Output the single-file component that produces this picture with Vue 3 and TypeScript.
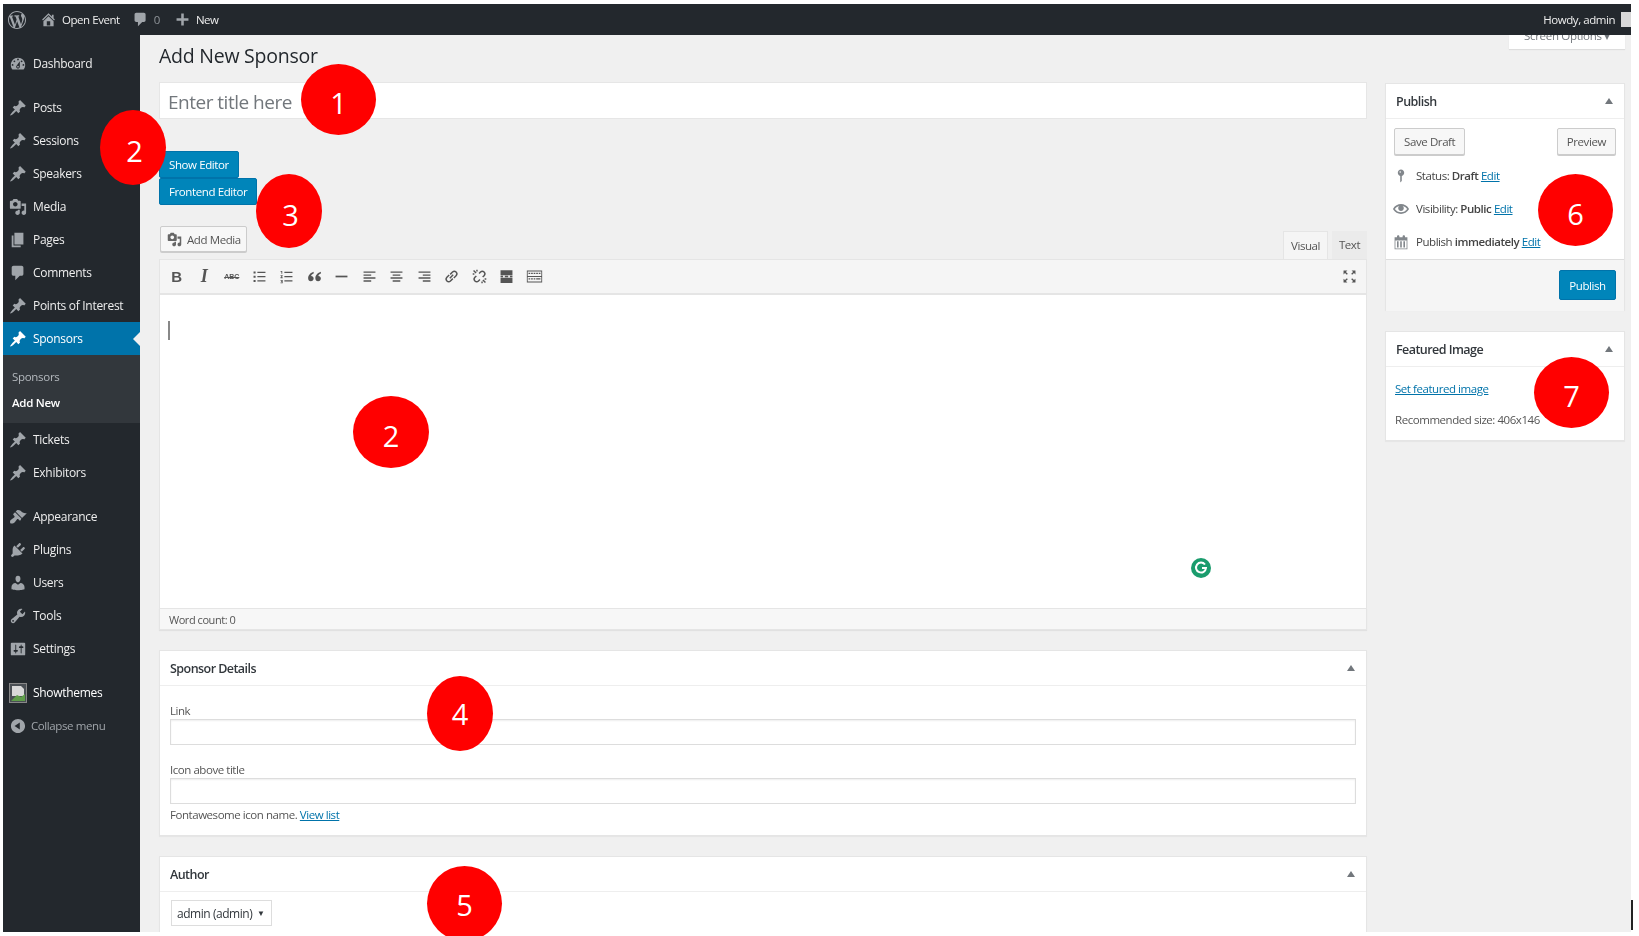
<template>
  <div class="page">
    <div class="frame">
      <header class="adminbar">
        <svg class="bar-logo" viewBox="0 0 20 20"><path :d="icons.wp" /></svg>
        <div class="bar-item">
          <svg class="bar-icon" viewBox="0 0 20 20"><path :d="icons.home" /></svg>
          <span>Open Event</span>
        </div>
        <div class="bar-item count">
          <svg class="bar-icon" viewBox="0 0 20 20"><path :d="icons.comment" /></svg>
          <span class="muted">0</span>
        </div>
        <div class="bar-item">
          <svg class="bar-icon" viewBox="0 0 20 20"><path :d="icons.plus" /></svg>
          <span>New</span>
        </div>
        <div class="bar-right">
          <span>Howdy, admin</span>
          <i class="avatar"></i>
        </div>
      </header>

      <div class="body">
        <nav class="sidebar">
          <template v-for="group in menu" :key="group[0].label">
            <div class="menu-group">
              <template v-for="item in group" :key="item.label">
                <div class="menu-row" :class="{ active: item.active }">
                  <svg class="menu-icon" viewBox="0 0 20 20"><path :d="icons[item.icon]" /></svg>
                  <span>{{ item.label }}</span>
                </div>
                <div v-if="item.active" class="submenu">
                  <div class="sub-row">Sponsors</div>
                  <div class="sub-row current">Add New</div>
                </div>
              </template>
            </div>
          </template>
          <div class="menu-group">
            <div class="menu-row">
              <svg class="theme-thumb" viewBox="0 0 18 20">
                <rect x="0.5" y="0.5" width="17" height="19" fill="#4a4f54" stroke="#888" />
                <path d="M3 3h9l3 3v7H3z" fill="#d9d9d9" />
                <path d="M2 18l6-6 4 2 4-3v7H2z" fill="#5f9e4a" />
              </svg>
              <span class="bright">Showthemes</span>
            </div>
            <div class="menu-row collapse">
              <svg class="menu-icon" viewBox="0 0 20 20"><path :d="icons.collapse" /></svg>
              <span>Collapse menu</span>
            </div>
          </div>
        </nav>

        <main class="content">
          <div class="head-row">
            <h1>Add New Sponsor</h1>
            <div class="screen-options">Screen Options ▾</div>
          </div>

          <div class="columns">
            <section class="left">
              <div class="title-input">Enter title here</div>

              <div class="editor-buttons">
                <button class="btn-blue">Show Editor</button>
                <button class="btn-blue">Frontend Editor</button>
              </div>

              <div class="media-row">
                <button class="btn add-media">
                  <svg viewBox="0 0 20 20"><path :d="icons.media" /></svg>
                  Add Media
                </button>
                <div class="tabs">
                  <span class="tab on">Visual</span>
                  <span class="tab">Text</span>
                </div>
              </div>

              <div class="toolbar">
                <b class="tool glyph bold">B</b>
                <i class="tool glyph italic">I</i>
                <s class="tool glyph abc">ABC</s>
                <span v-for="tool in tools" :key="tool.name" class="tool">
                  <svg viewBox="0 0 20 20">
                    <path :d="tool.d" :class="{ line: tool.line }" />
                  </svg>
                </span>
                <span class="tool full">
                  <svg viewBox="0 0 20 20"><path :d="fullscreen" /></svg>
                </span>
              </div>
              <div class="editor-area">
                <i class="caret"></i>
                <svg class="grammarly" viewBox="0 0 20 20">
                  <circle cx="10" cy="10" r="10" fill="#1a9c6d" />
                  <path d="M14 6.5A5 5 0 1 0 15 10h-4" fill="none" stroke="#fff" stroke-width="2" />
                </svg>
              </div>
              <div class="status-bar">Word count: 0</div>

              <div class="box details">
                <div class="box-head"><h2>Sponsor Details</h2><i class="toggle"></i></div>
                <div class="box-body">
                  <label>Link</label>
                  <div class="field"></div>
                  <label class="second">Icon above title</label>
                  <div class="field"></div>
                  <p class="hint">Fontawesome icon name. <a>View list</a></p>
                </div>
              </div>

              <div class="box author">
                <div class="box-head"><h2>Author</h2><i class="toggle"></i></div>
                <div class="author-body">
                  <div class="select">admin (admin) <small>▼</small></div>
                </div>
              </div>
            </section>

            <aside class="side">
              <div class="box publish">
                <div class="box-head"><h2>Publish</h2><i class="toggle"></i></div>
                <div class="publish-top">
                  <button class="btn">Save Draft</button>
                  <button class="btn">Preview</button>
                </div>
                <div class="pub-row">
                  <svg viewBox="0 0 20 20"><path :d="icons.pin" /></svg>
                  <span>Status: <b>Draft</b> <a>Edit</a></span>
                </div>
                <div class="pub-row">
                  <svg viewBox="0 0 20 20"><path :d="icons.eye" /></svg>
                  <span>Visibility: <b>Public</b> <a>Edit</a></span>
                </div>
                <div class="pub-row">
                  <svg viewBox="0 0 20 20"><path :d="icons.calendar" /></svg>
                  <span>Publish <b>immediately</b> <a>Edit</a></span>
                </div>
                <div class="publish-foot">
                  <button class="btn-blue big">Publish</button>
                </div>
              </div>

              <div class="box featured">
                <div class="box-head"><h2>Featured Image</h2><i class="toggle"></i></div>
                <div class="featured-body">
                  <a>Set featured image</a>
                  <p>Recommended size: 406x146</p>
                </div>
              </div>
            </aside>
          </div>
        </main>
      </div>
    </div>

    <div class="mark m1">1</div>
    <div class="mark m2">2</div>
    <div class="mark m3">3</div>
    <div class="mark m2b">2</div>
    <div class="mark m4">4</div>
    <div class="mark m5">5</div>
    <div class="mark m6">6</div>
    <div class="mark m7">7</div>
    <i class="edge-mark"></i>
  </div>
</template>

<script setup lang="ts">
interface MenuItem {
  label: string
  icon: string
  active?: boolean
}

const icons: Record<string, string> = {
  wp: 'M20 10c0-5.51-4.49-10-10-10C4.48 0 0 4.49 0 10c0 5.52 4.48 10 10 10 5.51 0 10-4.48 10-10zM7.78 15.37L4.37 6.22c.55-.02 1.17-.08 1.17-.08.5-.06.44-1.13-.06-1.11 0 0-1.45.11-2.37.11-.18 0-.37 0-.58-.01C4.12 2.69 6.87 1.11 10 1.11c2.33 0 4.45.87 6.05 2.34-.68-.11-1.65.39-1.65 1.58 0 .74.45 1.36.9 2.1.35.61.55 1.36.55 2.46 0 1.49-1.4 5-1.4 5l-3.03-8.37c.54-.02.82-.17.82-.17.5-.05.44-1.25-.06-1.22 0 0-1.44.12-2.38.12-.87 0-2.33-.12-2.33-.12-.5-.03-.56 1.2-.06 1.22l.92.08 1.26 3.41zM17.41 10c.24-.64.74-1.87.43-4.25.7 1.29 1.05 2.71 1.05 4.25 0 3.29-1.73 6.24-4.4 7.78.97-2.59 1.94-5.2 2.92-7.78zM6.1 18.09C3.12 16.65 1.11 13.53 1.11 10c0-1.3.23-2.48.72-3.59C3.25 10.3 4.67 14.2 6.1 18.09zm4.03-6.63l2.58 6.98c-.86.29-1.76.45-2.71.45-.79 0-1.57-.11-2.29-.33.81-2.38 1.62-4.74 2.42-7.1z',
  home: 'M16 8.5l1.53 1.53-1.06 1.06L10 4.62l-6.47 6.47-1.06-1.06L10 2.5l4 4v-2h2v4zm-6-2.46l6 5.99V18H4v-5.97zM12 17v-5H8v5h4z',
  comment: 'M5 2h9c1.1 0 2 .9 2 2v7c0 1.1-.9 2-2 2h-2l-5 5v-5H5c-1.1 0-2-.9-2-2V4c0-1.1.9-2 2-2z',
  plus: 'M17 8.5v3h-5.5V17h-3v-5.5H3v-3h5.5V3h3v5.5z',
  dashboard: 'M3.76 16h12.48c1.1-1.37 1.76-3.11 1.76-5 0-4.42-3.58-8-8-8s-8 3.58-8 8c0 1.89.66 3.63 1.76 5zM10 4c.55 0 1 .45 1 1s-.45 1-1 1-1-.45-1-1 .45-1 1-1zM6 6c.55 0 1 .45 1 1s-.45 1-1 1-1-.45-1-1 .45-1 1-1zm8 0c.55 0 1 .45 1 1s-.45 1-1 1-1-.45-1-1 .45-1 1-1zm-5.37 5.55L12 7v6c0 1.1-.9 2-2 2s-2-.9-2-2c0-.57.24-1.08.63-1.45zM4 10c.55 0 1 .45 1 1s-.45 1-1 1-1-.45-1-1 .45-1 1-1zm12 0c.55 0 1 .45 1 1s-.45 1-1 1-1-.45-1-1 .45-1 1-1zm-5 3c0-.55-.45-1-1-1s-1 .45-1 1 .45 1 1 1 1-.45 1-1z',
  post: 'M10.44 3.02l1.82-1.82 6.36 6.35-1.83 1.82c-1.05-.68-2.48-.57-3.41.36l-.75.75c-.92.93-1.04 2.35-.35 3.41l-1.83 1.82-2.41-2.41-2.8 2.79c-.42.42-3.38 2.71-3.8 2.29s1.86-3.39 2.28-3.81l2.79-2.79L4.1 9.36l1.83-1.82c1.05.69 2.48.57 3.4-.36l.75-.75c.93-.92 1.05-2.35.36-3.41z',
  media: 'M13 11V4c0-.55-.45-1-1-1h-1.67L9 1H5L3.67 3H2c-.55 0-1 .45-1 1v7c0 .55.45 1 1 1h10c.55 0 1-.45 1-1zM7 4.5c1.38 0 2.5 1.12 2.5 2.5S8.38 9.5 7 9.5 4.5 8.38 4.5 7 5.62 4.5 7 4.5zM14 6h5v10.5c0 1.38-1.12 2.5-2.5 2.5S14 17.88 14 16.5s1.12-2.5 2.5-2.5c.17 0 .34.02.5.05V9h-3V6zm-4 8.05V13h2v3.5c0 1.38-1.12 2.5-2.5 2.5S7 17.88 7 16.5 8.12 14 9.5 14c.17 0 .34.02.5.05z',
  page: 'M6 15V2h10v13H6zm-1 1h8v2H3V5h2v11z',
  appearance: 'M14.48 11.06L7.41 3.99l1.5-1.5c.5-.56 2.3-.47 3.51.32 1.21.8 1.43 1.28 2.91 2.1 1.18.64 2.45 1.26 4.45.85zm-.71.71L6.7 4.7 4.93 6.47c-.39.39-.39 1.02 0 1.41l1.06 1.06c.39.39.39 1.03 0 1.42-.6.6-1.43 1.11-2.21 1.69-.35.26-.7.53-1.01.84C1.43 13.23.75 15 1.43 17.01c2.01.68 3.78 0 5.02-1.29.31-.31.58-.66.84-1.01.58-.78 1.09-1.61 1.69-2.21.39-.39 1.03-.39 1.42 0l1.06 1.06c.39.39 1.02.39 1.41 0z',
  plugins: 'M13.11 4.36L9.87 7.6 8 5.73l3.24-3.24c.35-.34 1.05-.2 1.56.32.52.51.66 1.21.31 1.55zm-8 1.77l.91-1.12 9.01 9.01-1.19.84c-.71.71-2.63 1.16-3.82 1.16H6.14L4.9 17.26c-.59.59-1.54.59-2.12 0-.59-.58-.59-1.53 0-2.12l1.24-1.24v-3.88c0-1.13.4-3.19 1.09-3.89zm7.26 3.97l3.24-3.24c.34-.35 1.04-.21 1.55.31.52.51.66 1.21.31 1.55l-3.24 3.25z',
  users: 'M10 9.25c-2.27 0-2.73-3.44-2.73-3.44C7 4.02 7.82 2 9.97 2c2.16 0 2.98 2.02 2.71 3.81 0 0-.41 3.44-2.68 3.44zm0 2.57L12.72 10c2.39 0 4.52 2.33 4.52 4.53v2.49s-3.65 1.13-7.24 1.13c-3.65 0-7.24-1.13-7.24-1.13v-2.49c0-2.25 1.94-4.48 4.47-4.48z',
  tools: 'M16.68 9.77c-1.34 1.34-3.3 1.67-4.95.99l-5.41 6.52c-.99.99-2.59.99-3.58 0s-.99-2.59 0-3.57l6.52-5.42c-.68-1.65-.35-3.61.99-4.95 1.28-1.28 3.12-1.62 4.72-1.06l-2.89 2.89 2.82 2.82 2.86-2.87c.53 1.58.18 3.39-1.08 4.65zM3.81 16.21c.4.39 1.04.39 1.43 0 .4-.4.4-1.04 0-1.43-.39-.4-1.03-.4-1.43 0-.39.39-.39 1.03 0 1.43z',
  settings: 'M18 16V4c0-.55-.45-1-1-1H3c-.55 0-1 .45-1 1v12c0 .55.45 1 1 1h14c.55 0 1-.45 1-1zM8 11h1c.55 0 1 .45 1 1s-.45 1-1 1H8v1.5c0 .28-.22.5-.5.5s-.5-.22-.5-.5V13H6c-.55 0-1-.45-1-1s.45-1 1-1h1V5.5c0-.28.22-.5.5-.5s.5.22.5.5V11zm5-2h-1c-.55 0-1-.45-1-1s.45-1 1-1h1V5.5c0-.28.22-.5.5-.5s.5.22.5.5V7h1c.55 0 1 .45 1 1s-.45 1-1 1h-1v5.5c0 .28-.22.5-.5.5s-.5-.22-.5-.5V9z',
  collapse: 'M10 2.16c4.33 0 7.84 3.51 7.84 7.84s-3.51 7.84-7.84 7.84S2.16 14.33 2.16 10 5.71 2.16 10 2.16zm2 11.72V6.12L6.18 9.97z',
  pin: 'M14 6c0 1.86-1.28 3.41-3 3.86V16c0 1-2 2-2 2V9.86c-1.72-.45-3-2-3-3.86 0-2.21 1.79-4 4-4s4 1.79 4 4zM8 5c0 .55.45 1 1 1s1-.45 1-1-.45-1-1-1-1 .45-1 1z',
  eye: 'M19.7 9.4C17.7 6 14 3.9 10 3.9S2.3 6 .3 9.4L0 10l.3.6c2 3.4 5.7 5.5 9.7 5.5s7.7-2.1 9.7-5.5l.3-.6-.3-.6zM10 14.1c-3.1 0-6-1.6-7.7-4.1C3.6 8 5.7 6.6 8 6.1c-.9.6-1.5 1.7-1.5 2.9 0 1.9 1.6 3.5 3.5 3.5s3.5-1.6 3.5-3.5c0-1.2-.6-2.3-1.5-2.9 2.3.5 4.4 1.9 5.7 3.9-1.7 2.5-4.6 4.1-7.7 4.1z',
  calendar: 'M15 4h3v15H2V4h3V3c0-.41.15-.76.44-1.06.29-.29.65-.44 1.06-.44s.77.15 1.06.44c.29.3.44.65.44 1.06v1h4V3c0-.41.15-.76.44-1.06.29-.29.65-.44 1.06-.44s.77.15 1.06.44c.29.3.44.65.44 1.06v1zM3 8v10h14V8zM5 9h2v8H5zm4 0h2v8H9zm4 0h2v8h-2z',
}

const menu: MenuItem[][] = [
  [{ label: 'Dashboard', icon: 'dashboard' }],
  [
    { label: 'Posts', icon: 'post' },
    { label: 'Sessions', icon: 'post' },
    { label: 'Speakers', icon: 'post' },
    { label: 'Media', icon: 'media' },
    { label: 'Pages', icon: 'page' },
    { label: 'Comments', icon: 'comment' },
    { label: 'Points of Interest', icon: 'post' },
    { label: 'Sponsors', icon: 'post', active: true },
    { label: 'Tickets', icon: 'post' },
    { label: 'Exhibitors', icon: 'post' },
  ],
  [
    { label: 'Appearance', icon: 'appearance' },
    { label: 'Plugins', icon: 'plugins' },
    { label: 'Users', icon: 'users' },
    { label: 'Tools', icon: 'tools' },
    { label: 'Settings', icon: 'settings' },
  ],
]

const tools = [
  { name: 'ul', d: 'M3 4h2.4v2.4H3zM3 9h2.4v2.4H3zM3 14h2.4v2.4H3zM7.5 4.5H17v1.3H7.5zM7.5 9.5H17v1.3H7.5zM7.5 14.5H17v1.3H7.5z' },
  { name: 'ol', d: 'M3 3.5h2v3.2H4V4.5H3zM3 8.5h2.500v1L4.200 11H5.500v1H3v-1l1.300-1.500H3zM3 14h2.500v4H3v-1h1.500v-.500H3.500v-1h1v-.500H3zM7.500 4.500H17v1.300H7.500zM7.500 9.500H17v1.300H7.500zM7.500 14.500H17v1.300H7.500z' },
  { name: 'quote', d: 'M9 4.500C5.500 5.500 2.500 8.500 2.500 12c0 2.200 1.300 3.500 3.200 3.500S9 14.200 9 12.400s-1.300-3-3-3c.200-1.300 1.400-2.400 3-3zm8.500 0c-3.500 1-6.500 4-6.500 7.500 0 2.200 1.300 3.500 3.200 3.500s3.300-1.300 3.300-3.100-1.300-3-3-3c.200-1.300 1.400-2.400 3-3z' },
  { name: 'hr', d: 'M3 9h14v2H3z' },
  { name: 'left', d: 'M3 4h14v1.600H3zM3 7.500h9v1.600H3zM3 11h14v1.600H3zM3 14.500h9v1.600H3z' },
  { name: 'center', d: 'M3 4h14v1.600H3zM5.500 7.500h9v1.600h-9zM3 11h14v1.600H3zM5.500 14.500h9v1.600h-9z' },
  { name: 'right', d: 'M3 4h14v1.600H3zM8 7.500h9v1.600H8zM3 11h14v1.600H3zM8 14.500h9v1.600H8z' },
  { name: 'link', line: true, d: 'M8 12l4-4M8.500 7.500l2.700-2.700a3 3 0 0 1 4.200 0 3 3 0 0 1 0 4.200L12.700 11.700M11.500 12.500l-2.700 2.700a3 3 0 0 1-4.200 0 3 3 0 0 1 0-4.200L7.300 8.300' },
  { name: 'unlink', line: true, d: 'M9.500 6.500l1.700-1.700a3 3 0 0 1 4.200 0 3 3 0 0 1 0 4.200L13.700 10.700M10.500 13.500l-1.700 1.700a3 3 0 0 1-4.200 0 3 3 0 0 1 0-4.200L6.300 9.300M3 3l3 3M14 14l3 3M7 2v2M2 7h2M13 16v2M16 13h2' },
  { name: 'more', d: 'M3 2.500h14v6H3zM3 9.200h3v1.600H3zM8 9.200h4v1.600H8zM14 9.200h3v1.600h-3zM3 11.500h14v6H3z' },
  { name: 'sink', d: 'M1 3h18v14H1zM2 4v5.500h16V4zM2 10.500V16h16v-5.500zM3 5.500h2v1.500H3zM6 5.500h2v1.500H6zM9 5.500h2v1.500H9zM12 5.500h2v1.500h-2zM15 5.500h2v1.500h-2zM3 12h2v1.500H3zM6 12h2v1.500H6zM9 12h2v1.500H9zM12 12h5v1.500h-5z' },
]

const fullscreen = 'M3 3h4.500L5.800 4.700 8 6.900 6.900 8 4.700 5.800 3 7.500zM17 3v4.500l-1.700-1.700L13.100 8 12 6.900l2.200-2.200L12.500 3zM3 17v-4.500l1.700 1.700L6.900 12 8 13.100l-2.200 2.200L7.500 17zM17 17h-4.500l1.700-1.700L12 13.100l1.100-1.100 2.200 2.200 1.700-1.700z'
</script>

<style>
html,
body {
  margin: 0;
  background: #fff;
}
</style>

<style scoped>
.page {
  position: relative;
  width: 1639px;
  height: 936px;
  padding: 4px 8px 4px 3px;
  box-sizing: border-box;
  overflow: hidden;
  background: #fff;
  font-family: "Open Sans", "Noto Sans", sans-serif;
  font-size: 12px;
  color: #444;
}

.frame {
  width: 100%;
  height: 100%;
  display: flex;
  flex-direction: column;
  overflow: hidden;
  background: #f0f0f0;
  filter: blur(0.45px);
}

.adminbar {
  flex: none;
  height: 31px;
  display: flex;
  align-items: center;
  background: #23282d;
  color: #eee;
  font-size: 11.5px;
  letter-spacing: -0.45px;
  padding-left: 5px;
}

.bar-logo {
  width: 18px;
  height: 18px;
  fill: #a0a5aa;
  margin-right: 14px;
}

.bar-item {
  display: flex;
  align-items: center;
  gap: 5px;
  margin-right: 14px;
}

.bar-item:nth-child(2) {
  margin-right: 12px;
}

.bar-icon {
  width: 17px;
  height: 17px;
  fill: #a0a5aa;
}

.muted {
  color: #8f9499;
}

.bar-right {
  margin-left: auto;
  display: flex;
  align-items: center;
  gap: 6px;
}

.avatar {
  display: block;
  width: 10px;
  height: 15px;
  background: #d8d8d8;
}

.body {
  flex: 1;
  min-height: 0;
  display: flex;
}

.sidebar {
  flex: none;
  width: 137px;
  background: #23282d;
  padding-top: 12px;
  color: #eee;
  font-size: 12px;
  letter-spacing: -0.3px;
}

.menu-group {
  margin-bottom: 11px;
}

.menu-row {
  position: relative;
  height: 33px;
  display: flex;
  align-items: center;
  gap: 6px;
  padding-left: 6px;
}

.menu-icon {
  flex: none;
  width: 18px;
  height: 18px;
  fill: #a0a5aa;
}

.menu-row.active {
  background: #0073aa;
  color: #fff;
}

.menu-row.active .menu-icon {
  fill: #fff;
}

.menu-row.active::after {
  content: "";
  position: absolute;
  right: 0;
  top: 50%;
  margin-top: -7px;
  border: 7px solid transparent;
  border-left: 0;
  border-right-color: #f0f0f0;
}

.submenu {
  height: 68px;
  padding-top: 9px;
  box-sizing: border-box;
  background: #32373c;
}

.sub-row {
  height: 26px;
  line-height: 26px;
  padding-left: 9px;
  font-size: 11.5px;
  color: #b4b9be;
}

.sub-row.current {
  color: #fff;
  font-weight: 600;
}

.theme-thumb {
  flex: none;
  width: 18px;
  height: 20px;
}

.bright {
  color: #fff;
}

.collapse {
  color: #a0a5aa;
  gap: 4px;
  font-size: 11.5px;
  letter-spacing: -0.4px;
}

.content {
  flex: 1;
  min-width: 0;
  padding: 0 6px 0 19px;
}

.head-row {
  height: 47px;
  display: flex;
  justify-content: space-between;
  align-items: flex-start;
}

h1 {
  margin: 7px 0 0;
  font-size: 19.5px;
  line-height: 27px;
  font-weight: 400;
  color: #23282d;
  letter-spacing: -0.25px;
}

.screen-options {
  width: 116px;
  height: 14px;
  overflow: hidden;
  background: #fff;
  box-shadow: 0 1px 1px rgba(0, 0, 0, 0.08);
  text-align: center;
  font-size: 11.5px;
  letter-spacing: -0.3px;
  line-height: 2px;
  color: #72777c;
}

.columns {
  display: flex;
  gap: 18px;
  align-items: flex-start;
  font-size: 11.5px;
  letter-spacing: -0.45px;
}

.left {
  flex: 1;
  min-width: 0;
}

.side {
  flex: none;
  width: 240px;
  margin-top: 1px;
}

.title-input {
  height: 37px;
  line-height: 38px;
  padding-left: 8px;
  box-sizing: border-box;
  background: #fff;
  border: 1px solid #e6e6e6;
  font-size: 19px;
  letter-spacing: -0.5px;
  color: #72777c;
}

.editor-buttons {
  display: flex;
  flex-direction: column;
  align-items: flex-start;
  margin-top: 32px;
}

button {
  font-family: inherit;
  font-size: 11.5px;
  letter-spacing: -0.4px;
  margin: 0;
  border-radius: 2px;
  cursor: pointer;
}

.btn-blue {
  height: 27px;
  padding: 0 9px;
  color: #fff;
  background: #0085ba;
  border: 1px solid #0073aa;
}

.btn-blue.big {
  width: 57px;
  height: 30px;
  padding: 0;
}

.btn {
  height: 27px;
  padding: 0 9px;
  color: #555;
  background: #f7f7f7;
  border: 1px solid #ccc;
  box-shadow: 0 1px 0 #ccc;
}

.media-row {
  height: 33px;
  margin-top: 21px;
  display: flex;
  justify-content: space-between;
  align-items: flex-start;
}

.add-media {
  display: flex;
  align-items: center;
  gap: 5px;
  height: 26px;
  width: 87px;
  padding: 0 6px;
  margin-left: 1px;
  white-space: nowrap;
}

.add-media svg {
  flex: none;
  width: 15px;
  height: 15px;
  fill: #666;
}

.tabs {
  display: flex;
  gap: 4px;
  margin-top: 5px;
}

.tab {
  height: 28px;
  line-height: 28px;
  text-align: center;
  width: 35px;
  background: #ebebeb;
  color: #555;
}

.tab.on {
  width: 45px;
  background: #f5f5f5;
  border: 1px solid #e5e5e5;
  border-bottom: 0;
  box-sizing: border-box;
}

.toolbar {
  height: 36px;
  display: flex;
  align-items: center;
  padding-left: 3px;
  box-sizing: border-box;
  background: #f5f5f5;
  border: 1px solid #e5e5e5;
  border-bottom-width: 2px;
}

.tool {
  flex: none;
  width: 27.5px;
  height: 20px;
  display: flex;
  align-items: center;
  justify-content: center;
  color: #555;
}

.tool svg {
  width: 17px;
  height: 17px;
  fill: #555;
}

.tool svg path {
  fill-rule: evenodd;
}

.tool svg path.line {
  fill: none;
  stroke: #555;
  stroke-width: 1.7;
}

.glyph {
  font-family: "Liberation Sans", sans-serif;
  font-style: normal;
  font-size: 15px;
  letter-spacing: 0;
}

.bold {
  font-weight: 700;
}

.italic {
  font-family: "Liberation Serif", serif;
  font-style: italic;
  font-size: 18px;
  font-weight: 700;
}

.abc {
  font-size: 7px;
  font-weight: 700;
}

.full {
  margin-left: auto;
  margin-right: 3px;
}

.editor-area {
  position: relative;
  height: 313px;
  background: #fff;
  border-left: 1px solid #e5e5e5;
  border-right: 1px solid #e5e5e5;
  box-sizing: border-box;
}

.caret {
  position: absolute;
  left: 8px;
  top: 26px;
  width: 2px;
  height: 19px;
  background: #888;
}

.grammarly {
  position: absolute;
  right: 155px;
  top: 263px;
  width: 20px;
  height: 20px;
}

.status-bar {
  height: 22px;
  line-height: 22px;
  padding-left: 9px;
  box-sizing: border-box;
  background: #f7f7f7;
  border: 1px solid #e5e5e5;
  font-size: 11px;
  color: #555;
  box-shadow: 0 1px 1px rgba(0, 0, 0, 0.06);
}

.box {
  background: #fff;
  border: 1px solid #e5e5e5;
  box-shadow: 0 1px 1px rgba(0, 0, 0, 0.04);
  box-sizing: border-box;
}

.box-head {
  height: 35px;
  display: flex;
  align-items: center;
  justify-content: space-between;
  padding: 0 11px 0 10px;
  border-bottom: 1px solid #eee;
  box-sizing: border-box;
}

.box-head h2 {
  margin: 0;
  font-size: 12.5px;
  font-weight: 600;
  letter-spacing: -0.55px;
  color: #32373c;
}

.toggle {
  display: block;
  border: 4px solid transparent;
  border-top: 0;
  border-bottom: 6px solid #72777c;
}

.details {
  height: 186px;
  margin-top: 20px;
}

.box-body {
  padding: 16px 10px 0;
}

label {
  display: block;
  height: 17px;
  line-height: 17px;
  color: #555;
}

label.second {
  margin-top: 16px;
}

.field {
  height: 26px;
  background: #fff;
  border: 1px solid #ddd;
  box-sizing: border-box;
  box-shadow: inset 0 1px 2px rgba(0, 0, 0, 0.07);
}

.hint {
  margin: 2px 0 0;
  line-height: 17px;
  color: #555;
}

a {
  color: #0073aa;
  text-decoration: underline;
}

.author {
  height: 90px;
  margin-top: 20px;
}

.author-body {
  padding: 8px 11px;
}

.select {
  width: 101px;
  height: 26px;
  line-height: 24px;
  padding-left: 5px;
  box-sizing: border-box;
  border: 1px solid #ddd;
  font-size: 12px;
  color: #32373c;
}

.select small {
  font-size: 8px;
  vertical-align: 2px;
  margin-left: 2px;
}

.publish {
  height: 227px;
}

.publish-top {
  display: flex;
  justify-content: space-between;
  padding: 9px 8px 0;
}

.pub-row {
  height: 33px;
  display: flex;
  align-items: center;
  gap: 7px;
  padding-left: 7px;
}

.pub-row:nth-child(3) {
  margin-top: 4px;
}

.pub-row svg {
  width: 16px;
  height: 16px;
  fill: #82878c;
}

.pub-row b {
  font-weight: 600;
}

.publish-foot {
  display: flex;
  justify-content: flex-end;
  margin-top: 1px;
  padding: 10px 8px 0;
  height: 52px;
  box-sizing: border-box;
  background: #f5f5f5;
  border-top: 1px solid #ddd;
}

.featured {
  height: 110px;
  margin-top: 21px;
}

.featured-body {
  padding: 14px 9px 0;
}

.featured-body p {
  margin: 16px 0 0;
  color: #555;
}

.mark {
  position: absolute;
  display: flex;
  align-items: center;
  justify-content: center;
  padding-top: 6px;
  box-sizing: border-box;
  border-radius: 50%;
  background: #ff0000;
  color: #fff;
  font-size: 29px;
  line-height: 1;
}

.m1 { left: 301px; top: 64px; width: 75px; height: 71px; }
.m2 { left: 100px; top: 110px; width: 66px; height: 75px; padding-top: 5px; padding-left: 3px; }
.m3 { left: 256px; top: 174px; width: 66px; height: 74px; padding-left: 3px; }
.m2b { left: 353px; top: 396px; width: 76px; height: 72px; }
.m4 { left: 427px; top: 676px; width: 66px; height: 75px; padding-top: 0; }
.m5 { left: 427px; top: 866px; width: 75px; height: 75px; padding-top: 2px; }
.m6 { left: 1538px; top: 174px; width: 75px; height: 72px; }
.m7 { left: 1534px; top: 357px; width: 75px; height: 71px; }

.edge-mark {
  position: absolute;
  left: 1631px;
  top: 900px;
  width: 2px;
  height: 30px;
  background: #222;
}
</style>
